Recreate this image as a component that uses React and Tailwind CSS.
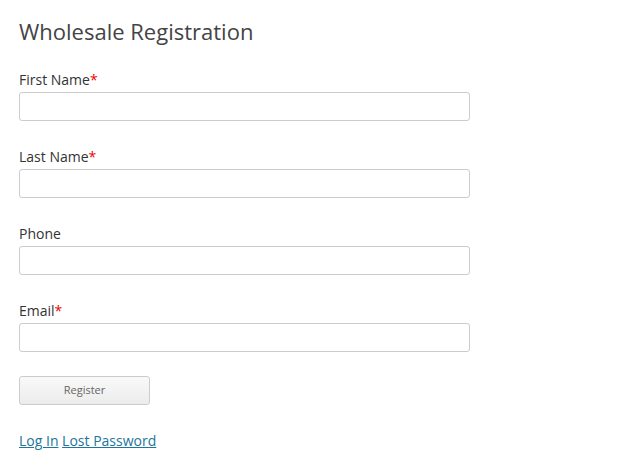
export default function App() {
  const fields = [
    { label: "First Name", required: true },
    { label: "Last Name", required: true },
    { label: "Phone", required: false },
    { label: "Email", required: true },
  ];

  return (
    <div className="min-h-[475px] bg-white pl-[19px] pt-[15px] text-[#333] font-['Open_Sans',sans-serif]">
      <h1 className="text-[22px] leading-[32px] font-normal text-[#444]">Wholesale Registration</h1>

      <form className="mt-[23px] flex flex-col">
        <div className="flex flex-col gap-[26px]">
          {fields.map((field) => (
            <div key={field.label} className="flex flex-col">
              <label className="text-[14px] leading-[20px] text-[#333]">
                {field.label}
                {field.required && <span className="text-[#e00]">*</span>}
              </label>
              <input
                type="text"
                className="mt-[2px] h-[29px] w-[451px] rounded-[3px] border border-[#ccc] bg-white px-2 text-[14px] outline-none"
              />
            </div>
          ))}
        </div>

        <button
          type="button"
          className="mt-[24px] h-[29px] w-[131px] rounded-[3px] border border-[#ccc] bg-gradient-to-b from-[#f9f9f9] to-[#ececec] text-[11px] text-[#666]"
        >
          Register
        </button>
      </form>

      <div className="mt-[26px] text-[14px] leading-[20px] text-[#21759b]">
        <a href="#" className="underline">Log In</a>{" "}
        <a href="#" className="underline">Lost Password</a>
      </div>
    </div>
  );
}
